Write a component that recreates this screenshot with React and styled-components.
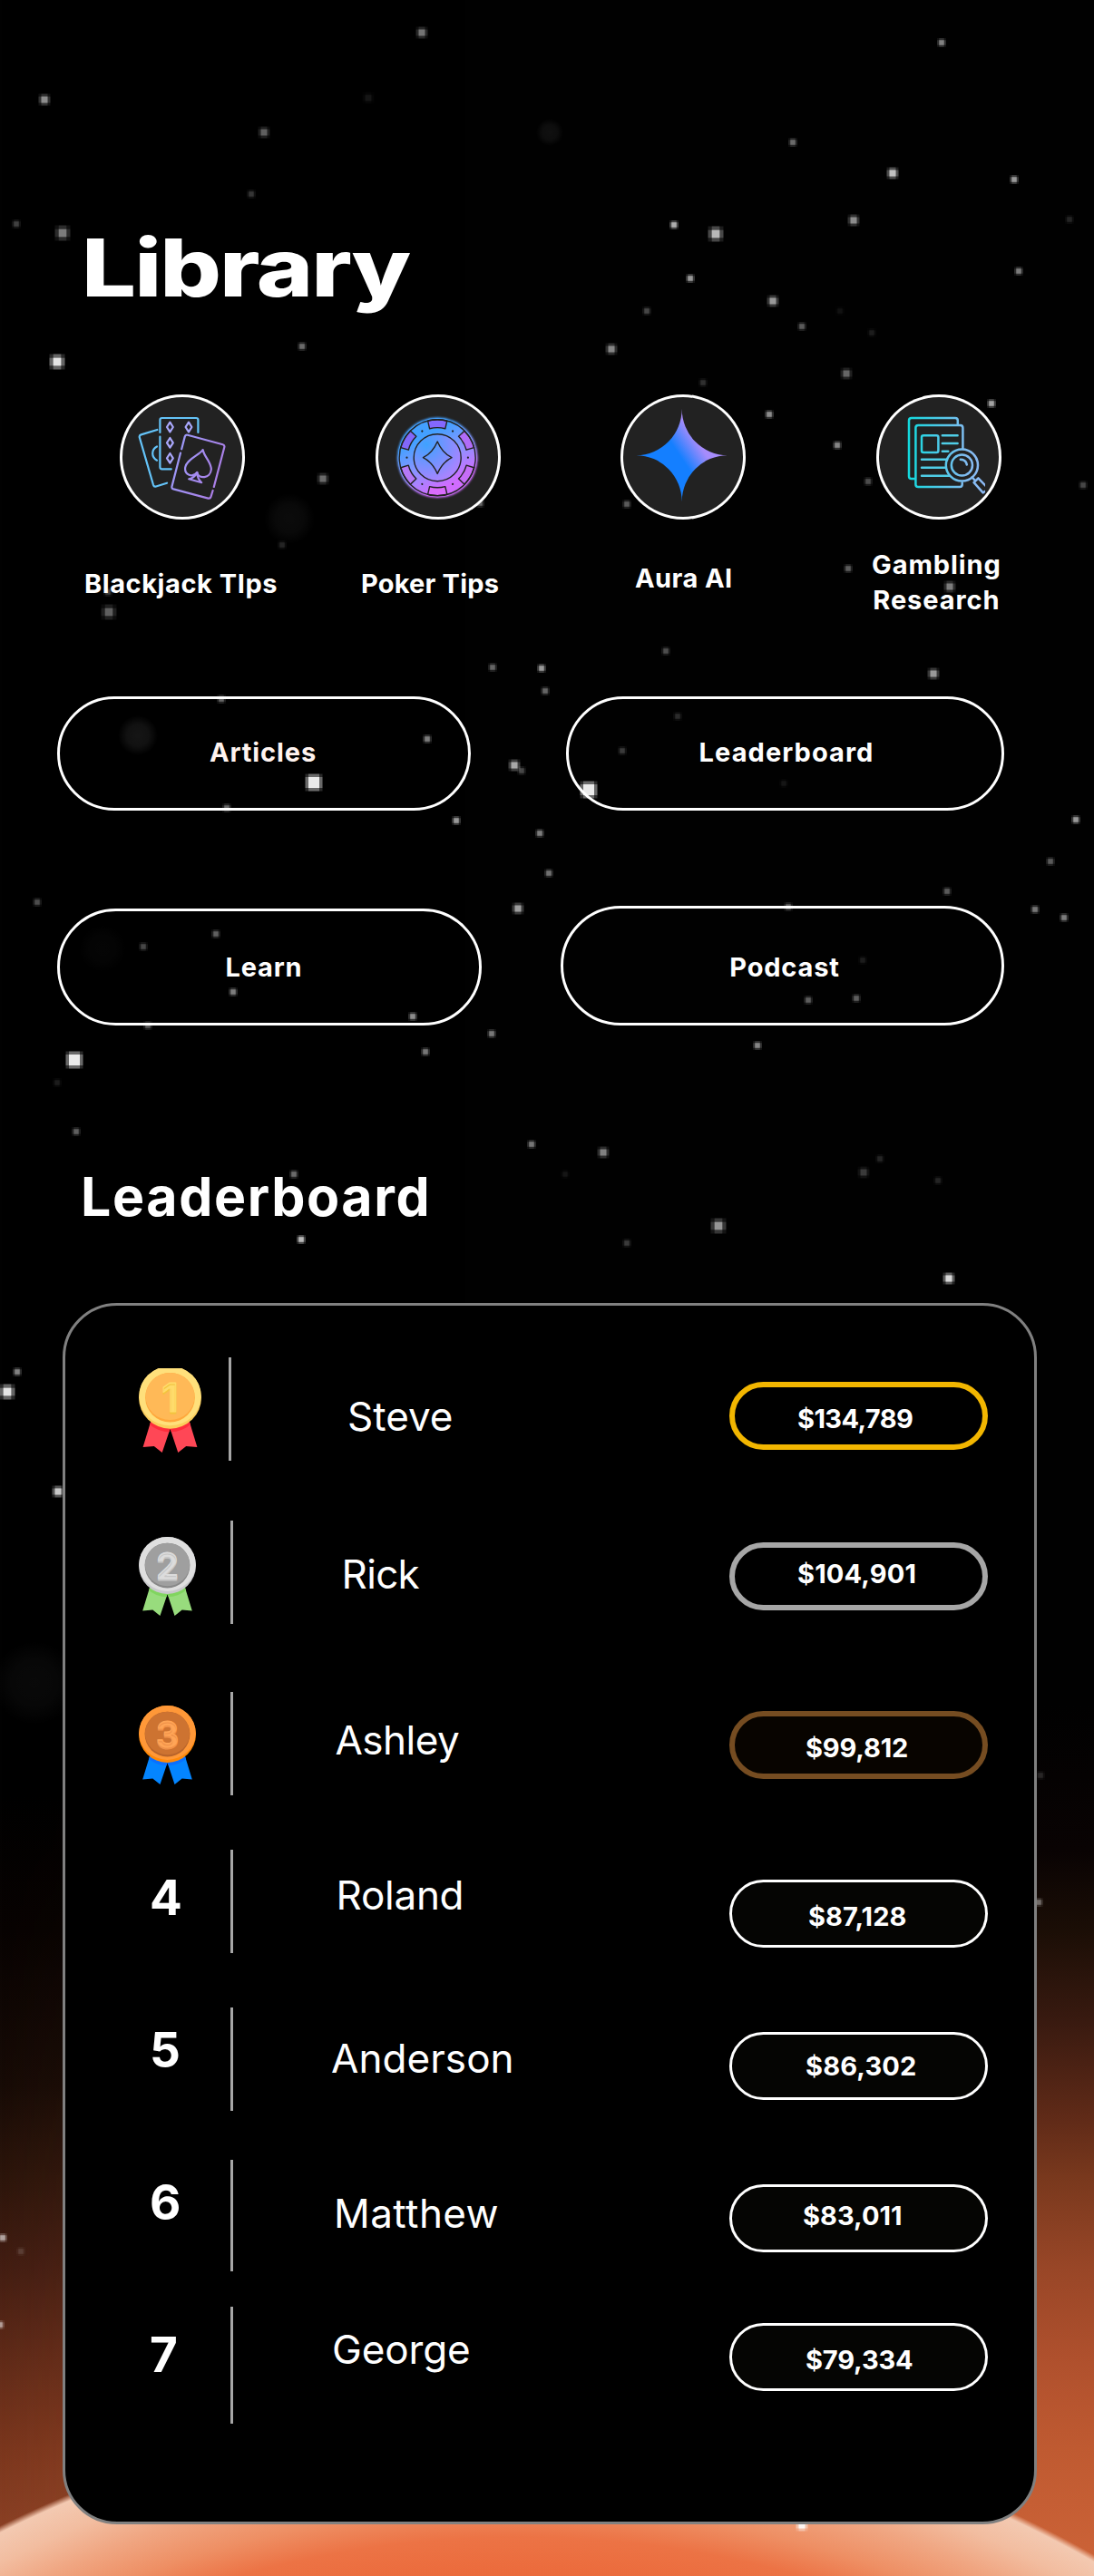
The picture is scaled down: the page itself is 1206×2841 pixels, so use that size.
import React from "react";
import styled, { createGlobalStyle } from "styled-components";

const GlobalStyle = createGlobalStyle`
  * { box-sizing: border-box; }
  body { margin: 0; background: #000; }
`;

const Page = styled.main`
  position: relative;
  width: 1206px;
  height: 2841px;
  overflow: hidden;
  display: flex;
  flex-direction: column;
  align-items: flex-start;
  color: #fff;
  font-family: Inter, "Liberation Sans", sans-serif;
  background: #000;
`;

const Sky = styled.div`
  position: absolute;
  inset: 0;
  background: linear-gradient(
    to bottom,
    #010101 0,
    #010101 1980px,
    #080302 2130px,
    #170b06 2300px,
    #2c150b 2400px,
    #421d12 2500px,
    #5f2a18 2600px,
    #7a361d 2700px,
    #8a4024 2790px
  );

  &::before {
    content: "";
    position: absolute;
    inset: 0;
    background: linear-gradient(
      to bottom,
      #010101 0,
      #010101 1880px,
      #090303 2040px,
      #1b0e06 2130px,
      #391a10 2230px,
      #612b18 2340px,
      #78381d 2400px,
      #984627 2500px,
      #af502d 2600px,
      #bf5a31 2700px,
      #cb6237 2820px
    );
    mask-image: linear-gradient(to right, transparent, #000 85%);
  }

  &::after {
    content: "";
    position: absolute;
    inset: 0;
    background: radial-gradient(
      circle 1290px at 573px 3938px,
      #eb6839 0,
      #eb6a3b 1095px,
      #ec7345 1140px,
      #ee8f64 1175px,
      #f0a682 1215px,
      #f2bda0 1250px,
      #f3c9b1 1280px,
      rgba(243, 201, 177, 0) 1287px
    );
  }
`;

const StarField = styled.svg`
  position: absolute;
  inset: 0;
  width: 1206px;
  height: 2841px;
`;

const Title = styled.h1`
  position: relative;
  margin: 251px 0 0 90px;
  font-size: 88px;
  line-height: 88px;
  font-weight: 800;
  letter-spacing: -1.6px;
  transform: scaleX(1.207);
  transform-origin: left;
`;

const Topics = styled.nav`
  position: relative;
  display: flex;
  height: 333px;
  margin-top: 96px;
  padding-left: 81px;
`;

const Topic = styled.a`
  width: 240px;
  margin-right: ${(p) => p.$gap}px;
  display: flex;
  flex-direction: column;
  align-items: flex-start;
`;

const Badge = styled.span`
  width: 138px;
  height: 138px;
  margin-left: 51px;
  border-radius: 50%;
  background: #222;
  box-shadow: inset 0 0 0 3px #fff;

  svg {
    display: block;
  }
`;

const TopicLabel = styled.span`
  margin: ${(p) => p.$drop}px 0 0 ${(p) => p.$indent}px;
  font-size: 29px;
  line-height: 39px;
  font-weight: 700;
  letter-spacing: ${(p) => p.$spacing}px;
  text-align: center;
  white-space: pre;
`;

const ButtonRow = styled.div`
  position: relative;
  display: flex;
  align-items: flex-end;
  gap: ${(p) => p.$gap}px;
  margin: ${(p) => p.$top}px 0 0 63px;
`;

const PillButton = styled.button`
  display: flex;
  align-items: center;
  justify-content: center;
  width: ${(p) => p.$w}px;
  height: ${(p) => p.$h}px;
  padding: 0;
  border: 3px solid #fff;
  border-radius: 66px;
  background: transparent;
  color: ${(p) => p.$tint || "#fff"};
  font: 700 29px/30px Inter, "Liberation Sans", sans-serif;
  letter-spacing: ${(p) => p.$spacing}px;

  span {
    margin: ${(p) => p.$nudge};
  }
`;

const Heading = styled.h2`
  position: relative;
  margin: 160px 0 0 89px;
  font-size: 59px;
  line-height: 58px;
  font-weight: 700;
  letter-spacing: 1.6px;
`;

const Board = styled.ol`
  position: relative;
  list-style: none;
  width: 1074px;
  height: 1347px;
  margin: 88px 0 0 69px;
  padding: 57px 51px 0 0;
  border: 3px solid #808080;
  border-radius: 60px;
  background: #000;
`;

const Entry = styled.li`
  display: flex;
  align-items: flex-start;
  height: ${(p) => p.$h}px;
`;

const Rank = styled.div`
  width: ${(p) => p.$w}px;
  padding: ${(p) => p.$top}px 0 0 ${(p) => p.$left}px;
  font-size: 53px;
  line-height: 52px;
  font-weight: 700;

  svg {
    display: block;
  }
`;

const Divider = styled.div`
  width: 3px;
  height: ${(p) => p.$h}px;
  background: #a6a6a6;
`;

const Name = styled.div`
  flex: 1;
  padding: ${(p) => p.$top}px 0 0 ${(p) => p.$left}px;
  font-size: 44px;
  line-height: 44px;
  letter-spacing: ${(p) => p.$spacing}px;
`;

const Amount = styled.div`
  width: 285px;
  height: 75px;
  margin-top: ${(p) => p.$drop}px;
  padding: ${(p) => p.$top - p.$line}px 0 0 ${(p) => p.$left - p.$line}px;
  border: ${(p) => p.$line}px solid ${(p) => p.$color};
  border-radius: 38px;
  background: ${(p) => p.$fill};
  font-size: 29px;
  line-height: 30px;
  font-weight: 700;
  letter-spacing: ${(p) => p.$spacing}px;
`;

/* x, y, brightness, size step */
const STARS = [
  [465, 36, 0.35, 2], [1038, 47, 0.4, 1], [49, 110, 0.45, 2], [291, 146, 0.28, 2], [406, 108, 0.06, 2],
  [874, 157, 0.32, 1], [984, 191, 0.7, 2], [1118, 198, 0.5, 1], [277, 214, 0.15, 1], [18, 247, 0.18, 1],
  [69, 257, 0.38, 3], [743, 248, 0.6, 1], [789, 258, 0.65, 3], [941, 243, 0.45, 2], [1179, 242, 0.1, 1],
  [761, 307, 0.5, 1], [1123, 299, 0.38, 1], [852, 332, 0.5, 2], [713, 343, 0.2, 1], [884, 360, 0.26, 1],
  [926, 343, 0.05, 1], [961, 367, 0.08, 1], [674, 385, 0.42, 2], [63, 399, 0.95, 3], [333, 382, 0.32, 1],
  [933, 412, 0.3, 2], [775, 422, 0.13, 1], [848, 457, 0.45, 1], [1093, 445, 0.55, 1], [923, 491, 0.42, 1],
  [957, 531, 0.22, 1], [1194, 535, 0.2, 1], [356, 528, 0.32, 2], [691, 556, 0.26, 1], [529, 555, 0.3, 1],
  [311, 601, 0.1, 1], [120, 675, 0.28, 3], [119, 653, 0.18, 1], [935, 627, 0.27, 1], [1047, 647, 0.38, 2],
  [734, 718, 0.22, 1], [543, 736, 0.3, 1], [597, 737, 0.5, 1], [601, 762, 0.3, 1], [1029, 743, 0.5, 2],
  [244, 771, 0.3, 1], [471, 815, 0.38, 1], [567, 844, 0.58, 2], [575, 850, 0.2, 1], [346, 863, 1, 4],
  [649, 871, 1, 4], [250, 891, 0.3, 1], [503, 905, 0.5, 1], [595, 919, 0.38, 1], [605, 963, 0.34, 1],
  [747, 790, 0.12, 1], [686, 828, 0.16, 1], [864, 864, 0.06, 1], [1186, 904, 0.5, 1], [1158, 950, 0.26, 1],
  [1044, 983, 0.26, 1], [1141, 1003, 0.36, 1], [1173, 1012, 0.38, 1], [869, 1000, 0.28, 1], [41, 995, 0.22, 1],
  [571, 1002, 0.52, 2], [238, 1030, 0.28, 1], [158, 1044, 0.2, 1], [257, 1094, 0.38, 1], [951, 1059, 0.08, 1],
  [944, 1101, 0.27, 1], [891, 1103, 0.27, 1], [455, 1121, 0.45, 1], [163, 1131, 0.26, 1], [542, 1140, 0.36, 1],
  [469, 1160, 0.36, 1], [835, 1153, 0.42, 1], [82, 1169, 1, 4], [63, 1194, 0.08, 1], [84, 1248, 0.28, 1],
  [586, 1262, 0.36, 1], [665, 1271, 0.4, 2], [623, 1295, 0.06, 1], [970, 1278, 0.1, 1], [952, 1293, 0.16, 2],
  [1034, 1302, 0.1, 1], [324, 1295, 0.32, 1], [792, 1352, 0.48, 3], [332, 1367, 0.65, 1], [691, 1371, 0.16, 1],
  [1046, 1410, 0.85, 2], [8, 1535, 0.95, 3], [19, 1513, 0.4, 1], [64, 1645, 0.75, 2], [1145, 2098, 0.3, 1],
  [1147, 1958, 0.1, 1], [3, 2468, 0.5, 1], [0, 2564, 0.45, 1], [23, 2483, 0.1, 1], [884, 2785, 0.95, 2],
];

const HAZE = [
  [606, 146, 15, 0.06], [319, 572, 28, 0.045], [152, 811, 22, 0.085], [113, 1046, 26, 0.02], [38, 1856, 46, 0.035],
];

/* [core, halo] edge lengths by size step */
const STAR_SIZES = { 1: [5.5, 10], 2: [7, 13], 3: [8.6, 17], 4: [12, 19] };

function Stars() {
  return (
    <StarField viewBox="0 0 1206 2841">
      <defs>
        <radialGradient id="haze">
          <stop offset="0" stopColor="#fff" />
          <stop offset=".55" stopColor="#fff" stopOpacity=".8" />
          <stop offset="1" stopColor="#fff" stopOpacity="0" />
        </radialGradient>
      </defs>
      {HAZE.map(([x, y, r, a]) => (
        <circle key={x} cx={x} cy={y} r={r} fill="url(#haze)" opacity={a} />
      ))}
      {STARS.map(([x, y, a, s], i) => {
        const [core, halo] = STAR_SIZES[s];
        return (
          <g key={i} fill="#fff">
            <rect x={x - halo / 2} y={y - halo / 2} width={halo} height={halo} opacity={a * 0.16} />
            <rect x={x - core / 2} y={y - halo / 2} width={core} height={halo} opacity={a * 0.3} />
            <rect x={x - halo / 2} y={y - core / 2} width={halo} height={core} opacity={a * 0.3} />
            <rect x={x - core / 2} y={y - core / 2} width={core} height={core} opacity={a * 0.8} />
          </g>
        );
      })}
    </StarField>
  );
}

const Diamond = ({ x, y }) => (
  <path d={`M${x} ${y - 5.3}L${x + 3.4} ${y}L${x} ${y + 5.3}L${x - 3.4} ${y}Z`} />
);

function CardsIcon() {
  return (
    <svg width="138" height="138" viewBox="0 0 138 138" fill="none" strokeWidth="2.2" strokeLinecap="round" strokeLinejoin="round">
      <defs>
        <linearGradient id="cardRight" x1="57" y1="60" x2="115" y2="80" gradientUnits="userSpaceOnUse">
          <stop offset="0" stopColor="#9a9cfa" />
          <stop offset="1" stopColor="#ab7ee6" />
        </linearGradient>
      </defs>
      <g stroke="#64c3f8">
        <path d="M41.3 39L23.5 44.4Q21.2 45.2 21.8 47.4L37 99.8Q37.8 102.2 40 101.5L52 97.7" />
        <path d="M41 57.5Q36.2 60 36.2 65T41 72.7" />
        <path d="M44.4 42V28.2Q44.4 26 46.6 26H84.2Q86.4 26 86.4 28.2V42" />
        <path d="M44.4 46.5V80Q44.4 82.3 46.6 82.3H56.8" />
      </g>
      <g stroke="#a9a7fb">
        <Diamond x={55.4} y={36} />
        <Diamond x={76} y={36} />
        <Diamond x={55.4} y={53.3} />
        <Diamond x={55.4} y={70.3} />
      </g>
      <g stroke="url(#cardRight)">
        <path d="M68.2 60.3L71.8 46.4Q72.5 44.2 74.8 44.8L113.6 55.2Q115.9 55.9 115.3 58.2L103.8 102" />
        <path d="M102.6 106L100.5 112.9Q99.8 115.2 97.5 114.6L59.2 104.4Q56.9 103.7 57.5 101.4L67 64.6" />
        <path d="M91.6 61C88 67 74 71 72.2 80.5C71 88.5 80.5 92.5 85.3 86C87 94 100 92.5 100.8 83C101.3 75 93 69 91.6 61Z" />
        <path d="M85.3 86Q82 92.5 76.2 93.3L90.2 97.2Q85.5 93 85.3 86Z" />
      </g>
    </svg>
  );
}

const CHIP_SEGMENTS = ["#8468ff", "#b06cf8", "#c66df8", "#d96cfb", "#b579f6", "#8268fb"];

function ChipIcon() {
  return (
    <svg width="138" height="138" viewBox="0 0 138 138" fill="none" strokeLinejoin="round">
      <defs>
        <linearGradient id="chipBase" x1="45" y1="30" x2="88" y2="112" gradientUnits="userSpaceOnUse">
          <stop offset=".2" stopColor="#43a0ff" />
          <stop offset=".5" stopColor="#8795ff" />
          <stop offset=".85" stopColor="#d06cff" />
        </linearGradient>
        <radialGradient id="chipCore" cx="56" cy="55" r="42" gradientUnits="userSpaceOnUse">
          <stop offset="0" stopColor="#3ea2ff" />
          <stop offset="1" stopColor="#a884ff" />
        </radialGradient>
        <filter id="chipGlow" x="-20%" y="-20%" width="140%" height="140%">
          <feGaussianBlur stdDeviation="1.3" />
        </filter>
      </defs>
      <circle cx="68.2" cy="69.7" r="44.4" fill="url(#chipBase)" filter="url(#chipGlow)" />
      <circle cx="68.2" cy="69.7" r="43.6" fill="url(#chipBase)" />
      <g stroke="#222" strokeWidth="1.4">
        {CHIP_SEGMENTS.map((fill, i) => (
          <g key={fill} transform={`rotate(${i * 60} 68.2 69.7)`}>
            <path fill={fill} d="M57.6 29.2A42 42 0 0 1 78.8 29.2L76.8 37.8A33 33 0 0 0 59.6 37.8Z" />
            <circle transform="rotate(30 68.2 69.7)" cx="68.2" cy="36" r="1.1" fill="#222" stroke="none" />
          </g>
        ))}
        <circle cx="68.2" cy="69.7" r="42" />
        <circle cx="68.2" cy="69.7" r="26" fill="url(#chipCore)" />
        <path d="M68.2 52Q73.5 64.5 84 69.7Q73.5 75 68.2 87.4Q63 75 52.4 69.7Q63 64.5 68.2 52Z" />
      </g>
    </svg>
  );
}

function SparkIcon() {
  return (
    <svg width="138" height="138" viewBox="0 0 138 138">
      <defs>
        <linearGradient id="spark" x1="40" y1="88" x2="94" y2="52" gradientUnits="userSpaceOnUse">
          <stop offset=".5" stopColor="#147fff" />
          <stop offset=".88" stopColor="#a68cfb" />
        </linearGradient>
      </defs>
      <path
        fill="url(#spark)"
        d="M67.7 15.7A50.3 51.6 0 0 0 118 67.2A50.3 51.2 0 0 0 67.7 118.3A50.3 51.2 0 0 0 17.4 67.2A50.3 51.6 0 0 0 67.7 15.7Z"
      />
    </svg>
  );
}

function ResearchIcon() {
  return (
    <svg width="138" height="138" viewBox="0 0 138 138" fill="none" stroke="url(#paper)" strokeWidth="2.5" strokeLinecap="round" strokeLinejoin="round">
      <defs>
        <linearGradient id="paper" x1="36" y1="0" x2="118" y2="0" gradientUnits="userSpaceOnUse">
          <stop offset="0" stopColor="#13dadf" />
          <stop offset=".75" stopColor="#7fbcf0" />
          <stop offset="1" stopColor="#8dbaf5" />
        </linearGradient>
        <clipPath id="paperClip">
          <rect width="120" height="138" />
        </clipPath>
      </defs>
      <g clipPath="url(#paperClip)">
        <path d="M42.4 93H38.8Q36 93 36 90.2V28.8Q36 26 38.8 26H87Q89.8 26 89.8 28.8V33.5" />
        <path d="M95.4 60V37Q95.4 34 92.6 34H46.2Q43.4 34 43.4 36.8V99.2Q43.4 102 46.2 102H91.9Q94.7 102 94.7 99.2V97.5" />
        <rect x="50" y="45.3" width="18.4" height="18.7" rx="2" />
        <path stroke="#4fcde6" d="M72.8 45.3H89.6M72.8 54H89.6M72.8 62.7H79.3M50 71.7H77.2M50 80.7H76.6M50 89.7H80.5" />
        <circle cx="94.4" cy="78" r="17.6" />
        <circle cx="94.4" cy="78" r="11.6" />
        <path d="M92.8 71.8Q98.8 72 99.8 77.4M105.6 91.4L109 95" />
        <path d="M107.6 97.2L112.4 92.4L124 104.4L117.6 108.4Z" />
      </g>
    </svg>
  );
}

const MEDALS = {
  1: { w: 69, h: 93, box: "0 2.3 69 93", ring: "#ffe07b", ringShade: "#fbcd5c", face: "#ffb957", faceShade: "#ffa83c", digit: "#ffdb6b", digitShade: "#f3c43e", ribbon: "#ff4756", ribbonShade: "#ff2c3c" },
  2: { w: 63, h: 87, box: "0 0 69 95.3", ring: "#dfdfdf", ringShade: "#c9c9cc", face: "#9f9f9f", faceShade: "#888", digit: "#dcdcdc", digitShade: "#c6c6c6", ribbon: "#98dc7d", ribbonShade: "#80d55f" },
  3: { w: 63, h: 87, box: "0 0 69 95.3", ring: "#ff9838", ringShade: "#ff8908", face: "#cd7331", faceShade: "#b8642b", digit: "#ffa557", digitShade: "#f0924a", ribbon: "#0485ff", ribbonShade: "#0a70ff" },
};

const MedalDigit = styled.text`
  font: 600 44px Inter, "Liberation Sans", sans-serif;
  text-anchor: middle;
  stroke-linejoin: round;
  stroke-width: 1.2px;
  text-shadow: 0 2px 0 ${(p) => p.$shade};
`;

const RIBBON = "M13.2 61L4.6 89.3L16.8 88.3L25.7 95.3L34.6 69L43.3 95.3L52.2 88.3L64.4 89.3L55.8 61Z";

function Medal({ place }) {
  const m = MEDALS[place];
  const id = `ribbon${place}`;
  return (
    <svg width={m.w} height={m.h} viewBox={m.box}>
      <defs>
        <clipPath id={id}>
          <path d={RIBBON} />
        </clipPath>
      </defs>
      <path fill={m.ribbon} d={RIBBON} />
      <circle cx="34.5" cy="38.2" r="34.5" fill={m.ribbonShade} clipPath={`url(#${id})`} />
      <circle cx="34.5" cy="34.5" r="34.5" fill={m.ringShade} />
      <ellipse cx="34.5" cy="32.8" rx="34.2" ry="32.8" fill={m.ring} />
      <circle cx="34.5" cy="34.6" r="27.3" fill={m.faceShade} />
      <ellipse cx="34.5" cy="33.4" rx="27" ry="26" fill={m.face} />
      <MedalDigit x="34.5" y="50" fill={m.digit} stroke={m.digit} $shade={m.digitShade}>{place}</MedalDigit>
    </svg>
  );
}

const TOPICS = [
  { label: "Blackjack TIps", Icon: CardsIcon, gap: 42, drop: 51, indent: 12, spacing: 0.56 },
  { label: "Poker Tips", Icon: ChipIcon, gap: 30, drop: 51, indent: 35, spacing: 0.19 },
  { label: "Aura AI", Icon: SparkIcon, gap: 42, drop: 45, indent: 67, spacing: 0.42 },
  { label: "Gambling\nResearch", Icon: ResearchIcon, gap: 0, drop: 30, indent: 46, spacing: 0.9 },
];

const WHITE_PILL = { line: 3, color: "#fff", fill: "#050503" };

const ENTRIES = [
  { name: "Steve", amount: "$134,789", h: 180, rankTop: 12, bar: 114, nameTop: 43, nameLeft: 128, ns: 0, drop: 27, top: 25.5, left: 75, as: -0.59, line: 6, color: "#f2b600", fill: "#000" },
  { name: "Rick", amount: "$104,901", h: 189, rankTop: 18, bar: 114, nameTop: 37, nameLeft: 119.6, ns: -0.7, drop: 24, top: 19.5, left: 75, as: 0.16, line: 6, color: "#a6a6a6", fill: "#000" },
  { name: "Ashley", amount: "$99,812", h: 174, rankTop: 15, bar: 114, nameTop: 31, nameLeft: 112.4, ns: -0.49, drop: 21, top: 25.5, left: 84, as: -0.17, line: 6, color: "#754c21", fill: "#080400" },
  { name: "Roland", amount: "$87,128", h: 174, rankTop: 27, bar: 114, nameTop: 28, nameLeft: 113.6, ns: -0.28, drop: 33, top: 25.5, left: 87, as: 0.11, ...WHITE_PILL },
  { name: "Anderson", amount: "$86,302", h: 168, rankTop: 21, bar: 114, nameTop: 34, nameLeft: 108, ns: 0.07, drop: 27, top: 22.5, left: 84, as: 0.15, ...WHITE_PILL },
  { name: "Matthew", amount: "$83,011", h: 162, rankTop: 21, bar: 123, nameTop: 37, nameLeft: 111, ns: 0.43, drop: 27, top: 19.5, left: 81, as: 0.02, ...WHITE_PILL },
  { name: "George", amount: "$79,334", h: 162, rankTop: 27, bar: 129, nameTop: 25, nameLeft: 109, ns: -0.14, drop: 18, top: 25.5, left: 84, as: -0.17, ...WHITE_PILL },
];

export default function App() {
  return (
    <>
      <GlobalStyle />
      <Page>
        <Sky />
        <Stars />
        <Title>Library</Title>
        <Topics>
          {TOPICS.map(({ label, Icon, gap, drop, indent, spacing }) => (
            <Topic key={label} $gap={gap}>
              <Badge><Icon /></Badge>
              <TopicLabel $drop={drop} $indent={indent} $spacing={spacing}>{label}</TopicLabel>
            </Topic>
          ))}
        </Topics>
        <ButtonRow $top={0} $gap={105}>
          <PillButton $w={456} $h={126} $spacing={0.9} $nudge="0 2px 3px 0" $tint="#fff3ef"><span>Articles</span></PillButton>
          <PillButton $w={483} $h={126} $spacing={1.06} $nudge="0 0 3px 3px"><span>Leaderboard</span></PillButton>
        </ButtonRow>
        <ButtonRow $top={105} $gap={87}>
          <PillButton $w={468} $h={129} $spacing={0.8} $nudge="0 12px 0 0"><span>Learn</span></PillButton>
          <PillButton $w={489} $h={132} $spacing={0.83} $nudge="3px 0 0 5px"><span>Podcast</span></PillButton>
        </ButtonRow>
        <Heading>Leaderboard</Heading>
        <Board>
          {ENTRIES.map((e, i) => (
            <Entry key={e.name} $h={e.h}>
              <Rank $w={i === 0 ? 180 : 182} $top={e.rankTop} $left={i < 3 ? 81 : 93}>
                {i < 3 ? <Medal place={i + 1} /> : i + 1}
              </Rank>
              <Divider $h={e.bar} />
              <Name $top={e.nameTop} $left={e.nameLeft} $spacing={e.ns}>{e.name}</Name>
              <Amount
                $drop={e.drop}
                $top={e.top}
                $left={e.left}
                $spacing={e.as}
                $line={e.line}
                $color={e.color}
                $fill={e.fill}
              >
                {e.amount}
              </Amount>
            </Entry>
          ))}
        </Board>
      </Page>
    </>
  );
}
